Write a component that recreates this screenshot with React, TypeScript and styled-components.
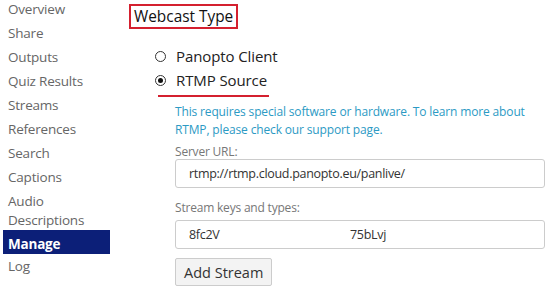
import React from 'react';
import styled, { createGlobalStyle } from 'styled-components';

const GlobalStyle = createGlobalStyle`
  html, body {
    margin: 0;
    padding: 0;
    background: #fff;
    font-family: 'Open Sans', 'Noto Sans', sans-serif;
  }
`;

const Page = styled.div`
  display: flex;
  width: 550px;
  height: 297px;
  overflow: hidden;
  column-gap: 19px;
`;

const Nav = styled.ul`
  list-style: none;
  margin: -3px 0 0;
  padding: 0 0 0 3px;
  width: 107px;
  flex-shrink: 0;
`;

const NavItem = styled.li<{ $active?: boolean; $wrapped?: boolean }>`
  padding: ${(p) => (p.$active ? '4.5px 5px 0.5px' : p.$wrapped ? '2.5px 5px 0.5px' : '2.5px 5px')};
  font-size: 13.5px;
  line-height: 19px;
  letter-spacing: -0.2px;
  color: ${(p) => (p.$active ? '#fff' : '#666')};
  background: ${(p) => (p.$active ? '#0c1f78' : 'transparent')};
  font-weight: ${(p) => (p.$active ? 700 : 400)};
`;

const Main = styled.div`
  display: flex;
  flex-direction: column;
  padding: 4px 5px 0 0;
  flex: 1;
`;

const Heading = styled.div`
  align-self: flex-start;
  border: 2px solid #d4202f;
  padding: 1px 3px 0;
  font-size: 15.4px;
  line-height: 20px;
  color: #111;
`;

const Options = styled.div`
  display: flex;
  flex-direction: column;
  margin: 17px 0 0 29px;
  row-gap: 4px;
`;

const Option = styled.label<{ $marked?: boolean }>`
  display: inline-flex;
  align-items: center;
  align-self: flex-start;
  column-gap: 10px;
  font-size: 15px;
  line-height: 20px;
  letter-spacing: -0.1px;
  color: #222;
  padding: 0 2px ${(p) => (p.$marked ? '5px' : '0')} 0;
  border-bottom: ${(p) => (p.$marked ? '2px solid #d4202f' : 'none')};
`;

const Radio = styled.span<{ $checked?: boolean }>`
  margin-left: -3px;
  width: 9px;
  height: 9px;
  border: 1px solid #333;
  border-radius: 50%;
  display: inline-flex;
  align-items: center;
  justify-content: center;
  &::after {
    content: '';
    width: 5px;
    height: 5px;
    border-radius: 50%;
    background: ${(p) => (p.$checked ? '#111' : 'transparent')};
  }
`;

const Details = styled.div`
  display: flex;
  flex-direction: column;
  margin: 6px 0 0 46px;
`;

const Note = styled.p`
  margin: 0;
  font-size: 12px;
  line-height: 18px;
  letter-spacing: -0.15px;
  color: #2c9ac4;
`;

const FieldLabel = styled.div<{ $gap: number }>`
  margin-top: ${(p) => p.$gap}px;
  font-size: 12px;
  line-height: 16px;
  letter-spacing: -0.2px;
  color: #777;
`;

const Field = styled.div`
  box-sizing: border-box;
  height: 29px;
  border: 1px solid #ccc;
  border-radius: 3px;
  display: flex;
  align-items: center;
  padding: 0 13px;
  font-size: 12.5px;
  letter-spacing: -0.3px;
  color: #333;
`;

const Key = styled.span`
  width: 161px;
`;

const Button = styled.button`
  margin-top: 9px;
  align-self: flex-start;
  height: 28px;
  padding: 0 8px;
  border: 1px solid #ccc;
  border-radius: 2px;
  background: #f3f3f3;
  font-family: inherit;
  font-size: 14.5px;
  color: #333;
`;

const navItems = ['Overview', 'Share', 'Outputs', 'Quiz Results', 'Streams', 'References', 'Search', 'Captions', 'Audio Descriptions', 'Manage', 'Log'];

export default function App() {
  return (
    <>
      <GlobalStyle />
      <Page>
        <Nav>
          {navItems.map((item) => (
            <NavItem key={item} $active={item === 'Manage'} $wrapped={item === 'Audio Descriptions'}>
              {item}
            </NavItem>
          ))}
        </Nav>
        <Main>
          <Heading>Webcast Type</Heading>
          <Options>
            <Option><Radio />Panopto Client</Option>
            <Option $marked><Radio $checked />RTMP Source</Option>
          </Options>
          <Details>
            <Note>This requires special software or hardware. To learn more about RTMP, please check our support page.</Note>
            <FieldLabel $gap={5}>Server URL:</FieldLabel>
            <Field style={{ marginTop: -1 }}>rtmp://rtmp.cloud.panopto.eu/panlive/</Field>
            <FieldLabel $gap={12}>Stream keys and types:</FieldLabel>
            <Field style={{ marginTop: 4 }}>
              <Key>8fc2V</Key>
              <span>75bLvj</span>
            </Field>
            <Button>Add Stream</Button>
          </Details>
        </Main>
      </Page>
    </>
  );
}
